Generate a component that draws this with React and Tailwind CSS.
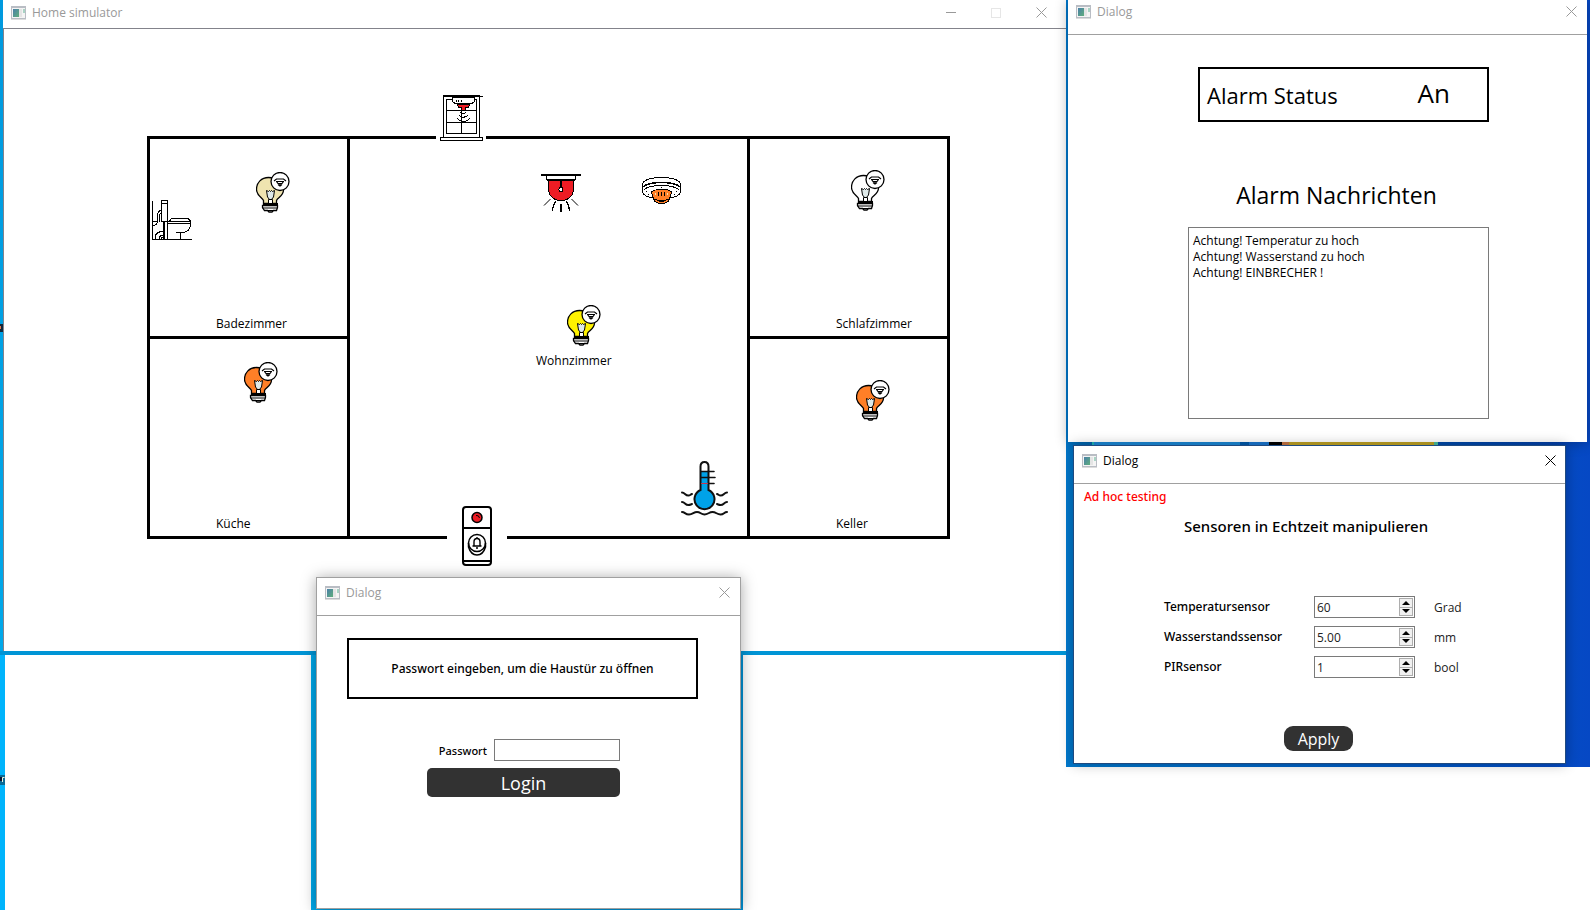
const FONT = "font-['Open_Sans','Noto_Sans',sans-serif]";

function AppIcon() {
  return (
    <svg width="15" height="14" viewBox="0 0 15 14" className="shrink-0" shapeRendering="crispEdges" aria-hidden="true">
      <defs>
        <linearGradient id="pane" x1="0" y1="0" x2="1" y2="1">
          <stop offset="0" stopColor="#4a7fa8" />
          <stop offset="1" stopColor="#5fae7c" />
        </linearGradient>
      </defs>
      <rect x="0" y="0" width="15" height="13" fill="#b9bdc4" />
      <rect x="1" y="2" width="13" height="10" fill="#f4f4f4" />
      <rect x="2" y="3" width="6" height="8" fill="url(#pane)" />
      <rect x="8" y="3" width="3" height="8" fill="#e4e4e4" />
      <rect x="12" y="3" width="2" height="4" fill="#a9d3c4" />
      <rect x="0" y="13" width="15" height="1" fill="#dcdcdc" />
    </svg>
  );
}

function CloseGlyph() {
  return (
    <svg width="11" height="11" viewBox="0 0 11 11" fill="none" stroke="currentColor" strokeWidth="1" aria-hidden="true">
      <path d="M0.5 0.5 10.5 10.5M10.5 0.5 0.5 10.5" />
    </svg>
  );
}

function TitleBar({ title, active, className }) {
  return (
    <header className={`flex items-start justify-between border-b border-[#a0a0a0] ${active ? "text-black" : "text-[#999999]"} ${className}`}>
      <div className="flex items-center gap-[6px]">
        <AppIcon />
        <h2 className="text-[12px] leading-4">{title}</h2>
      </div>
      <button type="button" aria-label="Close" className="mt-[2px]">
        <CloseGlyph />
      </button>
    </header>
  );
}

function Bulb({ color, className }) {
  return (
    <svg width="34" height="41" viewBox="0 0 34 41" fill="none" stroke="#000" strokeWidth="1" className={`absolute ${className}`} role="img" aria-label="Lampe">
      <path d="M7.500 31.500V28.500C6.500 26 0.500 23.500 0.500 17.500 0.500 10.500 5.500 5.500 12.500 5.500 20 5.500 27.500 11 27.500 18 27.500 24 21.500 25.500 20.500 28.500V31.500Z" fill={color} strokeWidth="1.300" />
      <path d="M10.500 18.500 12.500 19.500 13.500 18.500 14.500 19.500 15.500 18.500 16.500 19.500 18.500 18.500 17.500 25 15.500 27.500H13.500L11.500 25Z" fill="#dfeaea" />
      <path d="M12.500 27.500V31.500H16.500V27.500Z" fill="#fff" />
      <path d="M6.500 33.500H21.500V35.500L20.500 38.500H17.500L16 40H13L11.500 38.500H8.500L6.500 35.500Z" fill="#fff" strokeWidth="1.300" />
      <rect x="7" y="31" width="15" height="3" fill="#000" stroke="none" />
      <path d="M6.500 36H21.500M9 38.500H20" />
      <circle cx="24" cy="9.500" r="9" fill="#fff" strokeWidth="1.300" />
      <path d="M18 9 20.500 7H27.500L30 9M20 9.500H28M20.500 9.500 22 11.500H26L27.500 9.500M22 12.500 24 14 26 12.500M24 11V14" strokeWidth="1.200" />
    </svg>
  );
}

function Toilet({ className }) {
  return (
    <svg width="40" height="41" viewBox="0 0 40 41" fill="none" stroke="#000" strokeWidth="1" shapeRendering="crispEdges" className={`absolute ${className}`} role="img" aria-label="Toilette">
      <path d="M0.500 0.500V39.500H40" />
      <path d="M9.500 0.500H15.500V21.500H9.500ZM9.500 3.500H15.500" />
      <path d="M9.500 10.500C6.500 10.500 5.500 12 5.500 15.500V21.500H0.500M9.500 12.500C8 13 7.500 14 7.500 16V21.500M5.500 21.500C5.500 24 3 25.500 0.500 25.500" />
      <path d="M15.500 21.500H38.500V24.500C38.500 29 35 32.500 30.500 32.500H23.500M28.500 32.500V39.500M15.500 21.500V39.500M9.500 21.500H15.500" />
      <path d="M15.500 23.500H38M17.500 21.500 18.500 19.500Q19 18.500 21 18.500H35Q37.500 18.500 38.500 21.500" />
      <path d="M12 21.500V39.500" strokeWidth="2" />
      <path d="M3.500 39V37C3.500 33 6 31.500 11 31.500M7.500 39V37.500C7.500 36 9 35.500 11 35.500M9.500 39V37.500H11" />
    </svg>
  );
}

function WindowSensor({ className }) {
  return (
    <svg width="43" height="47" viewBox="0 0 43 47" fill="none" stroke="#000" strokeWidth="1" shapeRendering="crispEdges" className={`absolute ${className}`} role="img" aria-label="Fenstersensor">
      <path d="M3.500 1.500H39.500V42.500H3.500Z" fill="#fff" />
      <path d="M3 1H40" strokeWidth="2" />
      <path d="M40 1.500H43" />
      <path d="M6.500 4.500H36.500V38.500H6.500ZM21.500 15V38.500M6.500 15.500H36.500M6.500 27.500H36.500" />
      <path d="M12.500 2V5C12.500 7.500 14.500 8.500 17 8.500H30C32.500 8.500 34.500 7.500 34.500 5V2Z" fill="#fff" />
      <path d="M16.500 5V7M18.500 5V7M21.500 5V7" />
      <path d="M17.500 9.500H29.500L28.500 12.500H25.500V15.500H21.500V12.500H18.500Z" fill="#ed1c24" />
      <path d="M20 17.500Q23 20 26 17.500M19 20.500Q23 24 28 20.500M17.500 23.500Q23 30 30 23.500" />
      <path d="M0.500 42.500H42.500V45.500H0.500Z" fill="#fff" />
    </svg>
  );
}

function AlarmLamp({ className }) {
  return (
    <svg width="40" height="39" viewBox="0 0 40 39" fill="none" stroke="#000" strokeWidth="1" shapeRendering="crispEdges" className={`absolute ${className}`} role="img" aria-label="Alarmleuchte">
      <path d="M7.500 6V15C7.500 22 13 26.500 20 26.500 27 26.500 32.500 22 32.500 15V6Z" fill="#ed1c24" />
      <path d="M0 1H40" strokeWidth="2" />
      <path d="M5.500 2V5.500H34.500V2" fill="#fff" />
      <path d="M6 6H34" strokeWidth="2" />
      <path d="M20 6V14" strokeWidth="2" />
      <circle cx="20" cy="15.500" r="2" fill="#fff" />
      <path d="M20 29.500V38" strokeWidth="2" />
      <path d="M14.500 27.500C12.500 30 12.500 33 11 36.500M25.500 27.500C27.500 30 27.500 33 29 36.500" strokeWidth="1.500" />
      <path d="M9.500 25 3 31.500M30.500 25 37 31.500" shapeRendering="auto" />
    </svg>
  );
}

function SmokeDetector({ className }) {
  return (
    <svg width="39" height="29" viewBox="0 0 39 29" fill="none" stroke="#000" strokeWidth="1" shapeRendering="crispEdges" className={`absolute ${className}`} role="img" aria-label="Rauchmelder">
      <path d="M0.500 8V15.500C0.500 18.500 5 21.500 10.500 21.500H28.500C34 21.500 38.500 18.500 38.500 15.500V8Z" fill="#fff" />
      <path d="M0.500 8.500C0.500 4 9 1.500 19.500 1.500S38.500 4 38.500 8.500" fill="#fff" />
      <path d="M14 1H25" />
      <path d="M1 11C4 8 11 6.500 19.500 6.500S35 8 38 11" strokeWidth="1.500" />
      <path d="M2 13.500C6 10.500 12 9.500 19.500 9.500S33 10.500 37 13.500" />
      <path d="M9.500 16.500C9.500 14.500 14 13.500 19.500 13.500S29.500 14.500 29.500 16.500L27 23.500Q26 27.500 19.500 27.500T12 23.500Z" fill="#ff7f27" />
      <path d="M12.500 23.500Q19.500 25.500 26.500 23.500M17 25.500H22" />
      <path d="M16.500 16V20M19.500 16V20M22.500 16V20" strokeWidth="1.500" />
      <path d="M13.500 16.500V19M25.500 16.500V19" stroke="#efe4b0" />
      <path d="M19 11.500H20M4 15.500H5M34 15.500H35M6 18.500H7M32 18.500H33" />
    </svg>
  );
}

function Thermometer({ className }) {
  return (
    <svg width="48" height="56" viewBox="0 0 48 56" fill="none" stroke="#111" strokeWidth="2" strokeLinecap="round" className={`absolute ${className}`} role="img" aria-label="Wassertemperatur">
      <path d="M19.500 30V6.500Q19.500 2 23.500 2T27.500 6.500V30A10 10 0 1 1 19.500 30Z" fill="#fff" stroke="none" />
      <path d="M19.500 11.500H27.500V30A10 10 0 1 1 19.500 30Z" fill="#00a2e8" stroke="none" />
      <path d="M19.500 30V6.500Q19.500 2 23.500 2T27.500 6.500V30A10 10 0 1 1 19.500 30Z" />
      <path d="M20 11.500H33M20 17.500H34" strokeWidth="1.600" />
      <path d="M27.500 23.500H33" strokeWidth="1.600" />
      <path d="M20.500 23.500H26.500" stroke="#c8354d" strokeWidth="1" />
      <path d="M1 32.500C4 32.500 4 35.500 7.500 35.500 9 35.500 9.500 34.500 11 34M46 32.500C43 32.500 43 35.500 39.500 35.500 38 35.500 37.500 34.500 36 34M1 42C4 42 4 45 7.500 45 9 45 9.500 44.500 11 44M46 42C43 42 43 45 39.500 45 38 45 37.500 44.500 36 44M1 52C4 52 4 54.500 8 54.500S12.500 52 16 52 20 54.500 23.500 54.500 28 52 31.500 52 36 54.500 39.500 54.500 43 52 46 52" />
    </svg>
  );
}

function Doorbell({ className }) {
  return (
    <svg width="30" height="60" viewBox="0 0 30 60" fill="none" stroke="#000" className={`absolute ${className}`} role="img" aria-label="Türklingel">
      <rect x="1" y="1" width="28" height="58" rx="3" fill="#fff" strokeWidth="2" />
      <path d="M1 22H29M1 55H29" strokeWidth="2" />
      <circle cx="15" cy="11.500" r="5" fill="#ed1c24" strokeWidth="1.500" />
      <path d="M14 9.500Q17 9 17.500 12" strokeWidth="1" />
      <circle cx="15" cy="37" r="8.500" strokeWidth="1.500" />
      <path d="M6.500 37V41C8 46 11 49 15 49S22 46 23.500 41V37" strokeWidth="1.500" />
      <path d="M10.500 40H19.500M12 40V36C12 33.500 13 32.500 15 32.500S18 33.500 18 36V40M15 31V32.500M14 42H16" strokeWidth="1.400" />
    </svg>
  );
}

function Room({ name, labelClass, className, children }) {
  return (
    <section className={`relative bg-white ${className || ""}`}>
      {children}
      <span className={`absolute text-[12px] leading-4 ${labelClass}`}>{name}</span>
    </section>
  );
}

function FloorPlan() {
  return (
    <div className="relative mx-auto grid w-[803px] grid-cols-[197px_397px_197px] grid-rows-[197px_197px] gap-[3px] border-[3px] border-black bg-black">
      <Room name="Badezimmer" labelClass="bottom-[4px] left-[66px]">
        <Toilet className="left-[2px] top-[61px]" />
        <Bulb color="#efe4b0" className="left-[106px] top-[33px]" />
      </Room>
      <Room name="Wohnzimmer" labelClass="left-[186px] top-[214px]" className="row-span-2">
        <AlarmLamp className="left-[191px] top-[35px]" />
        <SmokeDetector className="left-[292px] top-[37px]" />
        <Bulb color="#fff200" className="left-[217px] top-[166px]" />
        <Thermometer className="bottom-[20px] right-[18px]" />
      </Room>
      <Room name="Schlafzimmer" labelClass="bottom-[4px] left-[86px]">
        <Bulb color="#ffffff" className="left-[101px] top-[31px]" />
      </Room>
      <Room name="Küche" labelClass="bottom-[4px] left-[66px]">
        <Bulb color="#ff7f27" className="left-[94px] top-[23px]" />
      </Room>
      <Room name="Keller" labelClass="bottom-[4px] left-[86px]">
        <Bulb color="#ff7f27" className="left-[106px] top-[41px]" />
      </Room>
      <div className="absolute -top-[3px] left-[286px] h-[3px] w-[50px] bg-white" />
      <div className="absolute -bottom-[3px] left-[297px] h-[3px] w-[60px] bg-white" />
      <WindowSensor className="-top-[44px] left-[290px]" />
      <Doorbell className="-bottom-[30px] left-[312px]" />
    </div>
  );
}

function HomeSimulator() {
  return (
    <main className="h-[651px] overflow-hidden bg-white">
      <header className="flex h-[29px] items-start justify-between border-b border-[#83838b] pl-[8px] pr-[19px] pt-[5px] text-[#999999]">
        <div className="flex items-center gap-[6px]">
          <AppIcon />
          <h1 className="text-[12px] leading-4">Home simulator</h1>
        </div>
        <div className="mt-[2px] flex items-center gap-[35px]">
          <button type="button" aria-label="Minimize">
            <svg width="10" height="11" viewBox="0 0 10 11" stroke="currentColor" aria-hidden="true"><path d="M0 5.500H10" /></svg>
          </button>
          <button type="button" aria-label="Maximize" disabled>
            <svg width="10" height="11" viewBox="0 0 10 11" fill="none" stroke="#e6e6e6" shapeRendering="crispEdges" aria-hidden="true"><path d="M0.500 1.500H9.500V10.500H0.500Z" /></svg>
          </button>
          <button type="button" aria-label="Close">
            <CloseGlyph />
          </button>
        </div>
      </header>
      <div className="h-full border-l border-[#83838b] pl-[27px] pt-[107px]">
        <FloorPlan />
      </div>
    </main>
  );
}

function AlarmDialog() {
  return (
    <section className="mr-[3px] h-[442px] bg-white shadow-[0_1px_12px_rgba(0,0,0,0.3)]">
      <TitleBar title="Dialog" className="h-[35px] pl-[8px] pr-[10px] pt-[4px]" />
      <div className="flex flex-col pl-[120px] pr-[98px] pt-[32px]">
        <div className="ml-[10px] flex h-[55px] items-center justify-between border-2 border-black pl-[7px] pr-[37px]">
          <span className="text-[22px] leading-8">Alarm Status</span>
          <output className="pb-[4px] text-[26px] leading-8">An</output>
        </div>
        <h3 className="mt-[55px] pr-[4px] text-center text-[23px] leading-9">Alarm Nachrichten</h3>
        <ul className="mt-[14px] h-[192px] border border-[#7a7a7a] px-[4px] py-[5px] text-[12px] leading-4">
          <li>Achtung! Temperatur zu hoch</li>
          <li>Achtung! Wasserstand zu hoch</li>
          <li>Achtung! EINBRECHER !</li>
        </ul>
      </div>
    </section>
  );
}

function DesktopStrip() {
  return (
    <div className="flex h-[3px] pl-[24px]" aria-hidden="true">
      <div className="w-[2px] bg-[#1aa0a0]" />
      <div className="w-[146px] bg-[#1878bd]" />
      <div className="w-[9px]" />
      <div className="w-[20px] bg-[#1668b8]" />
      <div className="w-[13px] bg-black" />
      <div className="w-[7px] bg-[#b0683c]" />
      <div className="w-[145px] bg-[#a98f1e]" />
      <div className="w-[4px] bg-[#3fa98c]" />
    </div>
  );
}

function Stepper({ id, value }) {
  return (
    <div className="flex h-[22px] w-[101px] border border-[#7a7a7a] bg-white">
      <input id={id} defaultValue={value} className="min-w-0 flex-1 pl-[2px] pt-[2px] text-[12px] leading-4 text-[#222222] outline-none" />
      <div className="m-px flex w-[14px] flex-col border border-[#adadad] bg-[#f0f0f0]">
        <button type="button" aria-label="Erhöhen" className="flex flex-1 items-center justify-center border-b border-[#adadad]">
          <svg width="8" height="4" viewBox="0 0 8 4" aria-hidden="true"><path d="M4 0 8 4H0Z" /></svg>
        </button>
        <button type="button" aria-label="Verringern" className="flex flex-1 items-center justify-center">
          <svg width="8" height="4" viewBox="0 0 8 4" aria-hidden="true"><path d="M4 4 8 0H0Z" /></svg>
        </button>
      </div>
    </div>
  );
}

const SENSORS = [
  { id: "temperature", label: "Temperatursensor", value: "60", unit: "Grad" },
  { id: "water", label: "Wasserstandssensor", value: "5.00", unit: "mm" },
  { id: "pir", label: "PIRsensor", value: "1", unit: "bool" },
];

function SensorDialog() {
  return (
    <section className="ml-[5px] mr-[24px] h-[319px] border border-[#1f4a80] bg-white shadow-[0_0_12px_rgba(0,0,0,0.3)]">
      <TitleBar title="Dialog" active className="h-[38px] pl-[8px] pr-[9px] pt-[7px]" />
      <p className="pl-[10px] pt-[5px] font-['Noto_Sans',sans-serif] text-[12px] font-medium leading-4 text-[#ff0000]">Ad hoc testing</p>
      <h3 className="mt-[9px] pl-[110px] font-['Noto_Sans',sans-serif] text-[15px] font-medium leading-6">Sensoren in Echtzeit manipulieren</h3>
      <form onSubmit={(e) => e.preventDefault()}>
        <div className="mt-[58px] flex flex-col gap-[8px] pl-[90px]">
          {SENSORS.map((s) => (
            <div key={s.id} className="flex items-center">
              <label htmlFor={s.id} className="w-[150px] font-['Noto_Sans',sans-serif] text-[12px] font-medium leading-4">{s.label}</label>
              <Stepper id={s.id} value={s.value} />
              <span className="pl-[19px] pt-[2px] text-[12px] leading-4 text-[#222222]">{s.unit}</span>
            </div>
          ))}
        </div>
        <button type="submit" className="ml-[210px] mt-[48px] block h-[25px] w-[69px] rounded-[9px] bg-[#323232] text-[16px] leading-6 text-white">Apply</button>
      </form>
    </section>
  );
}

function LoginDialog() {
  return (
    <section className="absolute left-[316px] top-[577px] h-[332px] w-[425px] border border-[#a0a0a0] bg-white shadow-[0_1px_14px_rgba(0,0,0,0.35)]">
      <TitleBar title="Dialog" className="h-[38px] pl-[8px] pr-[10px] pt-[7px]" />
      <p className="ml-[30px] mr-[42px] mt-[22px] flex h-[61px] items-center justify-center border-2 border-black font-['Noto_Sans',sans-serif] text-[12px] font-medium leading-4">Passwort eingeben, um die Haustür zu öffnen</p>
      <form onSubmit={(e) => e.preventDefault()} className="ml-[110px] mt-[40px] flex w-[193px] flex-col gap-[7px]">
        <div className="flex items-center justify-end gap-[7px]">
          <label htmlFor="password" className="pt-[2px] font-['Noto_Sans',sans-serif] text-[11px] font-medium leading-4">Passwort</label>
          <input id="password" type="password" className="h-[22px] w-[126px] border border-[#7a7a7a] px-1 outline-none" />
        </div>
        <button type="submit" className="h-[29px] rounded-[5px] bg-[#323232] text-[18px] leading-6 text-white">Login</button>
      </form>
    </section>
  );
}

export default function App() {
  return (
    <div className={`relative flex min-h-screen overflow-hidden bg-white text-black ${FONT}`}>
      <div className="flex min-w-0 flex-1 flex-col">
        <div className="bg-linear-to-b from-[#0099de] to-[#00a8ea] pl-[3px]">
          <HomeSimulator />
        </div>
        <div className="h-[4px] bg-[#0095d6]" />
        <div className="flex flex-1">
          <div className="w-[5px] bg-[#00b4fc]" />
          <div className="w-[306px] bg-white" />
          <div className="w-[432px] bg-linear-to-r from-[#00a8ea] to-[#0090d4]" />
        </div>
      </div>
      <svg width="3" height="8" className="absolute left-0 top-[324px]" aria-hidden="true">
        <rect width="3" height="8" fill="#10283c" />
        <rect width="1" height="3" y="2" fill="#e07850" />
      </svg>
      <svg width="5" height="10" className="absolute left-0 top-[775px]" aria-hidden="true">
        <rect width="5" height="10" fill="#0a6a96" />
        <rect width="2" height="4" y="2" fill="#0a1430" />
        <path d="M2.500 7V2.500H4.500" fill="none" stroke="#e8f4e0" />
      </svg>
      <aside className="h-[767px] w-[524px] bg-linear-to-r from-[#0078cc] to-[#0648c4] pl-[2px]">
        <AlarmDialog />
        <DesktopStrip />
        <SensorDialog />
      </aside>
      <LoginDialog />
    </div>
  );
}
